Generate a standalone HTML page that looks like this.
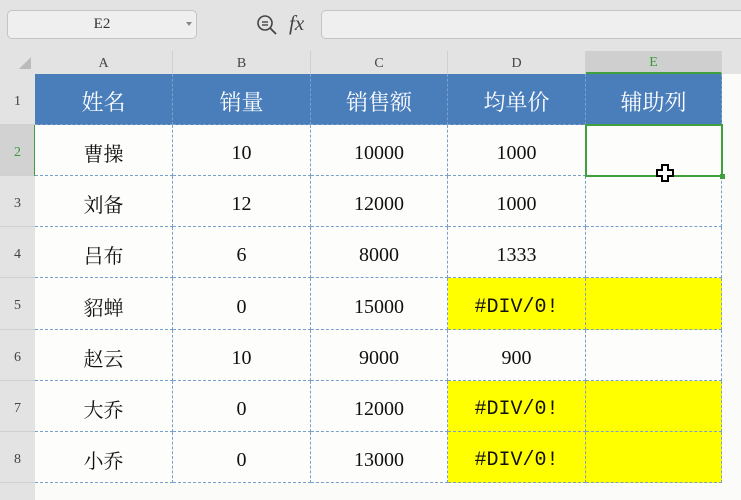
<!DOCTYPE html>
<html><head><meta charset="utf-8"><style>
*{margin:0;padding:0;box-sizing:border-box}
body{width:741px;height:500px;background:#e3e3e3;position:relative;overflow:hidden;font-family:"Liberation Serif","Noto Serif CJK SC",serif}
.box{position:absolute;background:#efefef;border:1px solid #c4c4c4;border-radius:5px}
.ch{position:absolute;top:51px;height:23px;display:flex;align-items:center;justify-content:center;color:#444;font-size:14px;border-right:1px solid #d0d0d0;line-height:1;padding-top:3px}
.rh{position:absolute;left:0;width:35px;display:flex;align-items:center;justify-content:center;color:#444;font-size:14px;background:#e3e3e3;border-bottom:1px solid #d0d0d0;line-height:1;padding-top:5px}
.cell{position:absolute;border-right:1px dashed #7aa0cc;border-bottom:1px dashed #7aa0cc;display:flex;align-items:center;justify-content:center;font-size:20px;color:#111;background:#fdfdfb;line-height:1;font-family:"Liberation Serif",serif;padding-top:6px}
.cn{font-family:"Noto Serif CJK SC",serif;font-size:20px}
.h{background:#4a7ebb;color:#fff;font-size:22px;font-family:"Noto Serif CJK SC",serif}
.y{background:#ffff00}
.e{font-family:"Liberation Mono",monospace;font-size:20px;padding-top:8px}
</style></head><body>
<div class="box" style="left:7px;top:10px;width:190px;height:29px;display:flex;align-items:center;justify-content:center;font-size:15px;color:#333">E2</div>
<div style="position:absolute;left:186px;top:22px;width:0;height:0;border-left:3px solid transparent;border-right:3px solid transparent;border-top:4px solid #888"></div>
<svg style="position:absolute;left:255px;top:13px" width="24" height="24" viewBox="0 0 24 24"><circle cx="10" cy="10" r="7" fill="none" stroke="#444" stroke-width="1.6"/><line x1="15" y1="15" x2="21" y2="21" stroke="#444" stroke-width="1.8"/><line x1="7" y1="9" x2="13" y2="9" stroke="#444" stroke-width="1.4"/><line x1="7" y1="12" x2="13" y2="12" stroke="#444" stroke-width="1.4"/></svg>
<div style="position:absolute;left:289px;top:11px;font-size:21px;font-style:italic;color:#444;font-family:'Liberation Serif',serif">fx</div>
<div class="box" style="left:321px;top:10px;width:440px;height:29px"></div>
<div style="position:absolute;left:19px;top:57px;width:0;height:0;border-left:12px solid transparent;border-bottom:12px solid #bbb"></div>
<div class="ch" style="left:35px;width:138px">A</div>
<div class="ch" style="left:173px;width:138px">B</div>
<div class="ch" style="left:311px;width:137px">C</div>
<div class="ch" style="left:448px;width:138px">D</div>
<div class="ch" style="left:586px;width:136px;background:#cfcfcf;color:#3a9a3a;border-bottom:2px solid #3fa03f">E</div>
<div style="position:absolute;left:722px;top:74px;width:19px;height:426px;background:#fbfbf9"></div>
<div style="position:absolute;left:35px;top:483px;width:706px;height:17px;background:#fbfbf9"></div>
<div class="rh" style="top:74px;height:51px">1</div>
<div class="rh" style="top:125px;height:51px;background:#d2d2d2;color:#3a9a3a">2</div>
<div class="rh" style="top:176px;height:51px">3</div>
<div class="rh" style="top:227px;height:51px">4</div>
<div class="rh" style="top:278px;height:52px">5</div>
<div class="rh" style="top:330px;height:51px">6</div>
<div class="rh" style="top:381px;height:51px">7</div>
<div class="rh" style="top:432px;height:51px">8</div>
<div class="rh" style="top:483px;height:17px;border:0"></div>
<div style="position:absolute;left:34px;top:125px;width:2px;height:51px;background:#3fa03f"></div>

<div class="cell h" style="left:35px;top:74px;width:138px;height:51px">姓名</div>
<div class="cell h" style="left:173px;top:74px;width:138px;height:51px">销量</div>
<div class="cell h" style="left:311px;top:74px;width:137px;height:51px">销售额</div>
<div class="cell h" style="left:448px;top:74px;width:138px;height:51px">均单价</div>
<div class="cell h" style="left:586px;top:74px;width:136px;height:51px">辅助列</div>

<div class="cell cn" style="left:35px;top:125px;width:138px;height:51px">曹操</div>
<div class="cell" style="left:173px;top:125px;width:138px;height:51px">10</div>
<div class="cell" style="left:311px;top:125px;width:137px;height:51px">10000</div>
<div class="cell" style="left:448px;top:125px;width:138px;height:51px">1000</div>
<div class="cell" style="left:586px;top:125px;width:136px;height:51px"></div>

<div class="cell cn" style="left:35px;top:176px;width:138px;height:51px">刘备</div>
<div class="cell" style="left:173px;top:176px;width:138px;height:51px">12</div>
<div class="cell" style="left:311px;top:176px;width:137px;height:51px">12000</div>
<div class="cell" style="left:448px;top:176px;width:138px;height:51px">1000</div>
<div class="cell" style="left:586px;top:176px;width:136px;height:51px"></div>

<div class="cell cn" style="left:35px;top:227px;width:138px;height:51px">吕布</div>
<div class="cell" style="left:173px;top:227px;width:138px;height:51px">6</div>
<div class="cell" style="left:311px;top:227px;width:137px;height:51px">8000</div>
<div class="cell" style="left:448px;top:227px;width:138px;height:51px">1333</div>
<div class="cell" style="left:586px;top:227px;width:136px;height:51px"></div>

<div class="cell cn" style="left:35px;top:278px;width:138px;height:52px">貂蝉</div>
<div class="cell" style="left:173px;top:278px;width:138px;height:52px">0</div>
<div class="cell" style="left:311px;top:278px;width:137px;height:52px">15000</div>
<div class="cell y e" style="left:448px;top:278px;width:138px;height:52px">#DIV/0!</div>
<div class="cell y" style="left:586px;top:278px;width:136px;height:52px"></div>

<div class="cell cn" style="left:35px;top:330px;width:138px;height:51px">赵云</div>
<div class="cell" style="left:173px;top:330px;width:138px;height:51px">10</div>
<div class="cell" style="left:311px;top:330px;width:137px;height:51px">9000</div>
<div class="cell" style="left:448px;top:330px;width:138px;height:51px">900</div>
<div class="cell" style="left:586px;top:330px;width:136px;height:51px"></div>

<div class="cell cn" style="left:35px;top:381px;width:138px;height:51px">大乔</div>
<div class="cell" style="left:173px;top:381px;width:138px;height:51px">0</div>
<div class="cell" style="left:311px;top:381px;width:137px;height:51px">12000</div>
<div class="cell y e" style="left:448px;top:381px;width:138px;height:51px">#DIV/0!</div>
<div class="cell y" style="left:586px;top:381px;width:136px;height:51px"></div>

<div class="cell cn" style="left:35px;top:432px;width:138px;height:51px">小乔</div>
<div class="cell" style="left:173px;top:432px;width:138px;height:51px">0</div>
<div class="cell" style="left:311px;top:432px;width:137px;height:51px">13000</div>
<div class="cell y e" style="left:448px;top:432px;width:138px;height:51px">#DIV/0!</div>
<div class="cell y" style="left:586px;top:432px;width:136px;height:51px"></div>

<div style="position:absolute;left:585px;top:124px;width:138px;height:53px;border:2px solid #3fa03f"></div>
<div style="position:absolute;left:720px;top:174px;width:5px;height:5px;background:#3fa03f"></div>
<svg style="position:absolute;left:655px;top:163px" width="20" height="20" viewBox="0 0 20 20"><path d="M7 2h6v5h5v6h-5v5H7v-5H2V7h5z" fill="#fff" stroke="#000" stroke-width="2"/></svg>
</body></html>
